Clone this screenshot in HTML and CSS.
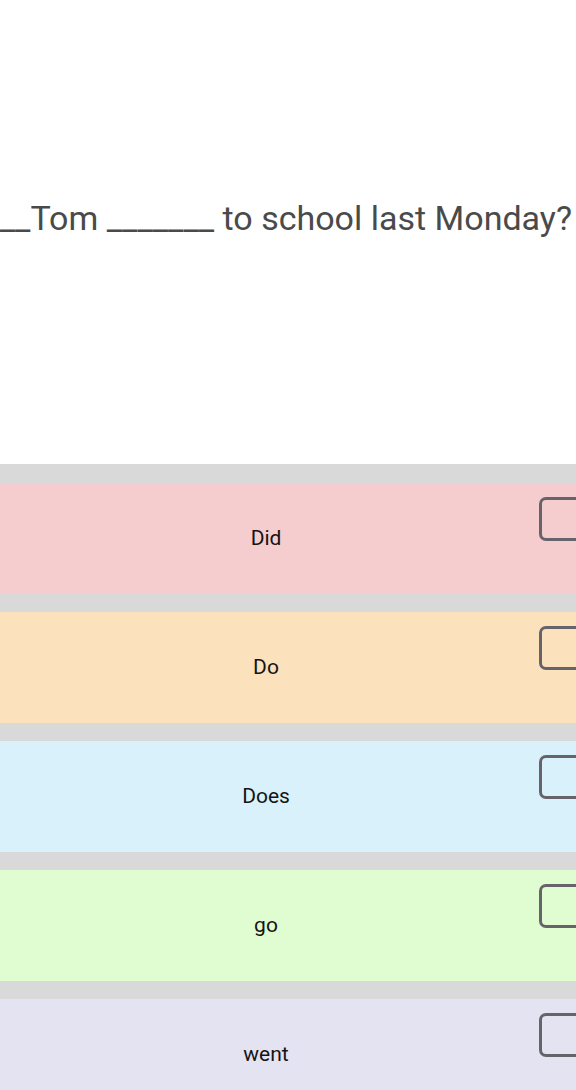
FILE: index.html
```html
<!DOCTYPE html>
<html lang="en">
<head>
  <meta charset="UTF-8">
  <title>Quiz</title>
  <link rel="stylesheet" href="styles.css">
</head>
<body>

  <div class="question">
    <p class="question-text">_______Tom _______ to school last Monday?</p>
  </div>

  <div class="answers">
    <div class="answer pink">
      <span class="answer-label">Did</span>
      <span class="check"></span>
    </div>
    <div class="answer orange">
      <span class="answer-label">Do</span>
      <span class="check"></span>
    </div>
    <div class="answer blue">
      <span class="answer-label">Does</span>
      <span class="check"></span>
    </div>
    <div class="answer green">
      <span class="answer-label">go</span>
      <span class="check"></span>
    </div>
    <div class="answer lavender">
      <span class="answer-label">went</span>
      <span class="check"></span>
    </div>
  </div>

</body>
</html>
```

FILE: styles.css
```css
* {
  box-sizing: border-box;
}

html, body {
  margin: 0;
  padding: 0;
  overflow: hidden;
}

body {
  font-family: Roboto, 'Noto Sans', sans-serif;
  background: #fff;
  width: 576px;
  height: 1090px;
}

.question {
  height: 464px;
  display: flex;
  justify-content: flex-end;
  padding: 195px 4px 0 0;
}

.question-text {
  margin: 0;
  flex: none;
  white-space: nowrap;
  font-size: 34px;
  line-height: 46px;
  color: #4a4a4a;
}

.answers {
  background: #d9d9d9;
  padding-top: 19px;
}

.answer {
  display: flex;
  align-items: center;
  height: 111px;
  margin-bottom: 18px;
}

.answer-label {
  flex: 0 0 532px;
  text-align: center;
  font-size: 21px;
  color: #141414;
  padding-bottom: 2px;
}

.check {
  flex: none;
  align-self: flex-start;
  margin-top: 14px;
  margin-left: 7px;
  width: 44px;
  height: 44px;
  border: 3px solid #67636a;
  border-radius: 7px;
}

.pink { background: #f6cdce; }
.orange { background: #fbe2bd; }
.blue { background: #d9f1fa; }
.green { background: #e0fdd1; }
.lavender { background: #e4e3f1; }
```
